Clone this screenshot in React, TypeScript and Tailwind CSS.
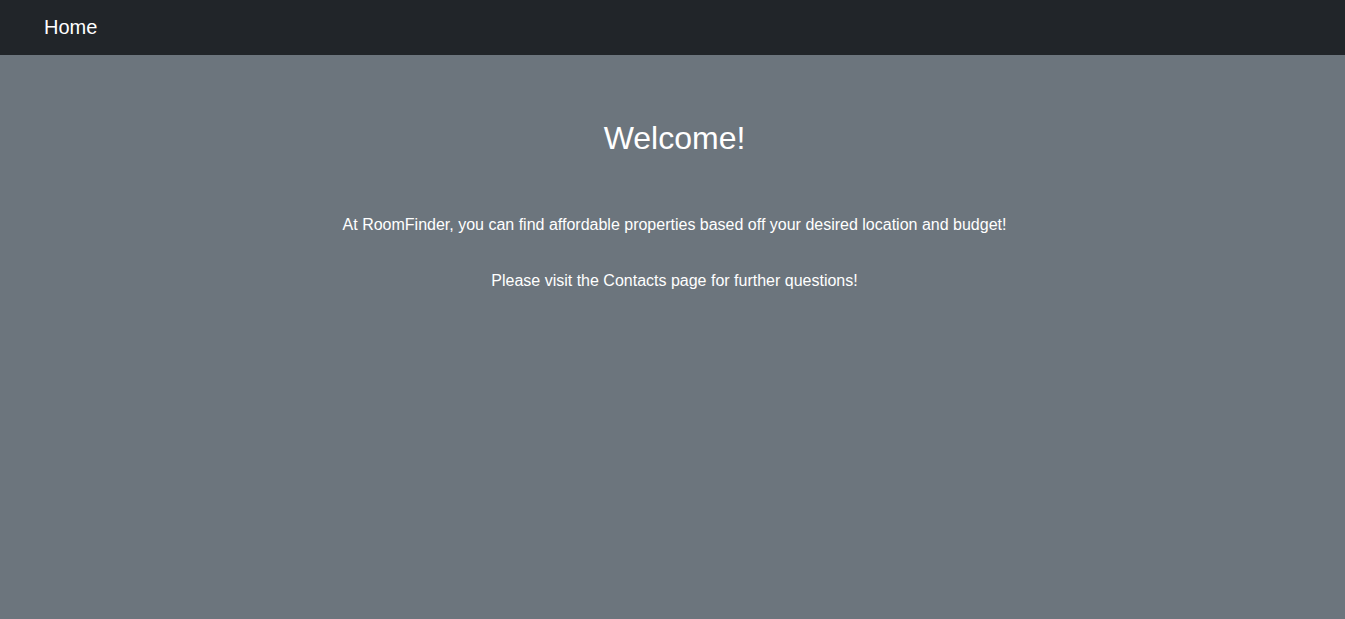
export default function App() {
  return (
    <div className="min-h-screen flex flex-col bg-[#6c757d] text-white" style={{ fontFamily: '"Liberation Sans", Arial, sans-serif' }}>
      <nav className="h-[55px] bg-[#212529] flex items-center pl-[44px] pb-[2px] shrink-0">
        <span className="text-[20px] leading-[30px] text-white">Home</span>
      </nav>
      <main className="flex-1 flex flex-col items-center pt-[64px] text-center">
        <h1 className="text-[32px] leading-[38px] font-normal pl-[4px]">Welcome!</h1>
        <p className="text-[16px] leading-[24px] mt-[56px] pl-[4px]">
          At RoomFinder, you can find affordable properties based off your desired location and budget!
        </p>
        <p className="text-[16px] leading-[24px] mt-[32px] pl-[4px]">
          Please visit the Contacts page for further questions!
        </p>
      </main>
    </div>
  );
}
